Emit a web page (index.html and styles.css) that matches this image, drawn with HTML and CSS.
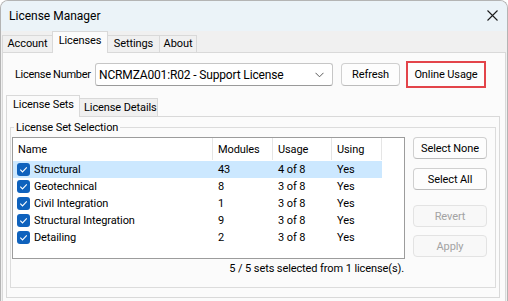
FILE: index.html
```html
<!DOCTYPE html>
<html>
<head>
<meta charset="utf-8">
<link rel="stylesheet" href="styles.css">
</head>
<body>
<div class="window">
  <div class="titlebar">
    <span class="title">License Manager</span>
    <svg class="close" width="11" height="11" viewBox="0 0 11 11"><path d="M0.5 0.5L10.5 10.5M10.5 0.5L0.5 10.5" stroke="#1c1c1c" stroke-width="1.1" fill="none"/></svg>
  </div>
  <div class="tabstrip">
    <div class="tab w-account">Account</div>
    <div class="tab active w-licenses">Licenses</div>
    <div class="tab w-settings">Settings</div>
    <div class="tab w-about">About</div>
  </div>
  <div class="panel">
    <div class="license-row">
      <span class="label">License Number</span>
      <div class="combo">
        <span class="combo-text">NCRMZA001:R02 - Support License</span>
        <svg class="chevron" width="9" height="6" viewBox="0 0 9 6"><path d="M0.5 0.8L4.5 4.8L8.5 0.8" stroke="#5a5a5a" stroke-width="1" fill="none"/></svg>
      </div>
      <div class="btn btn-refresh">Refresh</div>
      <div class="btn btn-online">Online Usage</div>
    </div>
    <div class="subtabstrip">
      <div class="subtab active w-sets">License Sets</div>
      <div class="subtab w-details">License Details</div>
    </div>
    <div class="subpanel">
      <fieldset class="group">
        <legend>License Set Selection</legend>
        <div class="group-body">
          <div class="left-col">
            <div class="list">
              <div class="list-head">
                <div class="col c-name">Name</div>
                <div class="col c-mod">Modules</div>
                <div class="col c-use">Usage</div>
                <div class="col c-using">Using</div>
              </div>
              <div class="row selected">
                <div class="col c-name"><span class="check"><svg width="13" height="13" viewBox="0 0 13 13"><path d="M3.3 6.7L5.5 8.9L9.8 4.4" stroke="#fff" stroke-width="1.1" fill="none"/></svg></span>Structural</div>
                <div class="col c-mod">43</div>
                <div class="col c-use">4 of 8</div>
                <div class="col c-using">Yes</div>
              </div>
              <div class="row">
                <div class="col c-name"><span class="check"><svg width="13" height="13" viewBox="0 0 13 13"><path d="M3.3 6.7L5.5 8.9L9.8 4.4" stroke="#fff" stroke-width="1.1" fill="none"/></svg></span>Geotechnical</div>
                <div class="col c-mod">8</div>
                <div class="col c-use">3 of 8</div>
                <div class="col c-using">Yes</div>
              </div>
              <div class="row">
                <div class="col c-name"><span class="check"><svg width="13" height="13" viewBox="0 0 13 13"><path d="M3.3 6.7L5.5 8.9L9.8 4.4" stroke="#fff" stroke-width="1.1" fill="none"/></svg></span>Civil Integration</div>
                <div class="col c-mod">1</div>
                <div class="col c-use">3 of 8</div>
                <div class="col c-using">Yes</div>
              </div>
              <div class="row">
                <div class="col c-name"><span class="check"><svg width="13" height="13" viewBox="0 0 13 13"><path d="M3.3 6.7L5.5 8.9L9.8 4.4" stroke="#fff" stroke-width="1.1" fill="none"/></svg></span>Structural Integration</div>
                <div class="col c-mod">9</div>
                <div class="col c-use">3 of 8</div>
                <div class="col c-using">Yes</div>
              </div>
              <div class="row">
                <div class="col c-name"><span class="check"><svg width="13" height="13" viewBox="0 0 13 13"><path d="M3.3 6.7L5.5 8.9L9.8 4.4" stroke="#fff" stroke-width="1.1" fill="none"/></svg></span>Detailing</div>
                <div class="col c-mod">2</div>
                <div class="col c-use">3 of 8</div>
                <div class="col c-using">Yes</div>
              </div>
            </div>
            <div class="status">5 / 5 sets selected from 1 license(s).</div>
          </div>
          <div class="btn-col">
            <div class="btn side">Select None</div>
            <div class="btn side gap-a">Select All</div>
            <div class="btn side disabled gap-b">Revert</div>
            <div class="btn side disabled gap-c">Apply</div>
          </div>
        </div>
      </fieldset>
    </div>
  </div>
</div>
</body>
</html>
```
FILE: styles.css
```css
* { box-sizing: border-box; }
html, body { margin: 0; padding: 0; }
body {
  width: 508px;
  height: 301px;
  overflow: hidden;
  background: #ffffff;
  font-family: Roboto, "Segoe UI", "Noto Sans", sans-serif;
  font-size: 11px;
  letter-spacing: -0.1px;
  color: #000;
  white-space: nowrap;
}
.window {
  width: 508px;
  height: 301px;
  border: 1px solid #b4b4b4;
  border-bottom: none;
  border-radius: 8px 8px 0 0;
  background: #f0f0f0;
  overflow: hidden;
  display: flex;
  flex-direction: column;
}
.titlebar {
  height: 30px;
  flex: none;
  display: flex;
  align-items: center;
  justify-content: space-between;
  padding: 0 9px 0 8px;
  background: #ebf3f8;
  font-size: 12px;
  letter-spacing: 0;
}
.close { display: block; margin-top: -1px; }
.tabstrip {
  height: 21px;
  flex: none;
  display: flex;
  align-items: flex-end;
  padding-left: 1px;
}
.tab {
  height: 17px;
  line-height: 16px;
  text-align: center;
  border: 1px solid #d9d9d9;
  border-bottom: none;
  margin-right: -1px;
  background: #f0f0f0;
}
.tab.active {
  height: 22px;
  line-height: 18px;
  margin-bottom: -1px;
  background: #fbfbfb;
  position: relative;
  z-index: 1;
}
.w-account { width: 51px; }
.w-licenses { width: 56px; }
.w-settings { width: 53px; }
.w-about { width: 38px; }
.panel {
  flex: 1;
  min-height: 0;
  margin: 0 1px;
  border: 1px solid #d9d9d9;
  border-bottom: none;
  background: #fbfbfb;
}
.license-row {
  display: flex;
  align-items: center;
  padding: 8px 0 0 12px;
}
.label { width: 80px; letter-spacing: -0.3px; }
.combo {
  width: 238px;
  height: 23px;
  border: 1px solid #c6c6c6;
  border-bottom-color: #9a9a9a;
  border-radius: 3px;
  background: #fff;
  display: flex;
  align-items: center;
  justify-content: space-between;
  padding: 0 8px 0 3px;
  font-size: 12px;
  letter-spacing: -0.15px;
}
.chevron { display: block; }
.btn {
  height: 23px;
  display: flex;
  align-items: center;
  justify-content: center;
  border: 1px solid #d0d0d0;
  border-bottom-color: #bcbcbc;
  border-radius: 4px;
  background: #fdfdfd;
}
.btn-refresh { width: 59px; margin-left: 8px; }
.btn-online {
  width: 80px;
  height: 27px;
  margin-left: 6px;
  border: 2px solid #e3444a;
  border-radius: 0;
  background: #fdfdfd;
}
.subtabstrip {
  height: 21px;
  margin-top: 7px;
  display: flex;
  align-items: flex-end;
  padding-left: 3px;
}
.subtab {
  height: 18px;
  line-height: 17px;
  padding-left: 4px;
  border: 1px solid #d9d9d9;
  border-bottom: none;
  margin-right: -1px;
  background: #f0f0f0;
}
.subtab.active {
  height: 22px;
  line-height: 18px;
  padding-left: 6px;
  margin-bottom: -1px;
  background: #fbfbfb;
  position: relative;
  z-index: 1;
}
.w-sets { width: 74px; }
.w-details { width: 79px; }
.subpanel {
  margin: 0 5px 0 3px;
  border: 1px solid #d9d9d9;
  background: #fbfbfb;
}
.group {
  margin: 4px 3px 9px 3px;
  padding: 3px 0 9px 1px;
  border: 1px solid #dcdcdc;
  min-width: 0;
}
.group legend {
  margin-left: 2px;
  padding: 0 2px;
  line-height: 13px;
}
.group-body {
  display: flex;
  align-items: flex-start;
}
.left-col { width: 393px; }
.list {
  height: 122px;
  border: 1px solid #9c9c9c;
  background: #fff;
}
.list-head {
  display: flex;
  height: 22px;
  align-items: stretch;
  margin-bottom: 1px;
}
.list-head .col {
  display: flex;
  align-items: center;
  border-right: 1px solid #e5e5e5;
}
.row {
  display: flex;
  height: 17px;
  align-items: center;
  width: 369px;
}
.row.selected { background: #cce8ff; }
.col { padding-left: 5px; }
.c-name { width: 200px; }
.c-mod { width: 60px; }
.c-use { width: 59px; }
.c-using { width: 50px; }
.row .c-name { display: flex; align-items: center; padding-left: 4px; }
.check {
  width: 13px;
  height: 13px;
  border-radius: 3px;
  background: #0f62bd;
  margin-right: 4px;
  display: block;
}
.check svg { display: block; }
.status {
  height: 19px;
  line-height: 19px;
  text-align: right;
  padding-right: 1px;
}
.btn-col {
  width: 74px;
  margin-left: 8px;
  display: flex;
  flex-direction: column;
}
.btn.side { height: 22px; }
.gap-a { margin-top: 9px; }
.gap-b { margin-top: 15px; }
.gap-c { margin-top: 8px; }
.btn.disabled {
  color: #a3a3a3;
  border-color: #e3e3e3;
  background: #f8f8f8;
}
```
